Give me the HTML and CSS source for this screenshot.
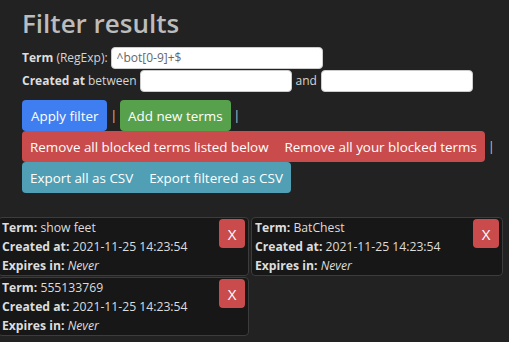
FILE: index.html
```html
<!DOCTYPE html>
<html lang="en">

<head>
    <meta charset="UTF-8" />
    <title>Filter results</title>
    <link rel="stylesheet" href="styles.css">
</head>

<body>

    <div class="filtro">
        <h1>Filter results</h1>

        <div class="linha">
            <b>Term</b>&nbsp;<span class="dica">(RegExp):</span>
            <input type="text" class="campo campoTermo" value="^bot[0-9]+$" />
        </div>
        <div class="linha">
            <b>Created at</b>&nbsp;between
            <input type="text" class="campo campoData" />
            <span class="e">and</span>
            <input type="text" class="campo campoData" />
        </div>

        <div class="acoes">
            <button class="btn azul">Apply filter</button>
            <span class="sep">|</span>
            <button class="btn verde">Add new terms</button>
            <span class="sep">|</span>
            <div class="grupo">
                <button class="btn vermelho">Remove all blocked terms listed below</button>
                <button class="btn vermelho">Remove all your blocked terms</button>
            </div>
            <span class="sep">|</span>
            <div class="grupo">
                <button class="btn ciano">Export all as CSV</button>
                <button class="btn ciano">Export filtered as CSV</button>
            </div>
        </div>
    </div>

    <div class="termos">
        <div class="termo">
            <button class="remover">X</button>
            <div><b>Term:</b> show feet</div>
            <div><b>Created at:</b> 2021-11-25 14:23:54</div>
            <div><b>Expires in:</b> <i>Never</i></div>
        </div>
        <div class="termo">
            <button class="remover">X</button>
            <div><b>Term:</b> BatChest</div>
            <div><b>Created at:</b> 2021-11-25 14:23:54</div>
            <div><b>Expires in:</b> <i>Never</i></div>
        </div>
        <div class="termo">
            <button class="remover">X</button>
            <div><b>Term:</b> 555133769</div>
            <div><b>Created at:</b> 2021-11-25 14:23:54</div>
            <div><b>Expires in:</b> <i>Never</i></div>
        </div>
    </div>

</body>

</html>
```

FILE: styles.css
```css
body {
    margin: 0;
    background-color: #222;
    color: #ddd;
    font-family: "Open Sans", "Noto Sans", sans-serif;
    font-size: 12px;
}

.filtro {
    padding: 6px 0 0 22px;
}

h1 {
    margin: 0 0 6px 0;
    font-size: 26px;
    font-weight: 600;
    line-height: 34px;
    color: #bcbcbc;
}

.linha {
    display: flex;
    align-items: center;
    height: 23px;
    color: #d4d4d4;
}

.linha b {
    color: #ddd;
}

.campo {
    height: 22px;
    box-sizing: border-box;
    border: 1px solid #ccc;
    border-radius: 4px;
    background: white;
    font-family: inherit;
    font-size: 12px;
    color: #666;
    padding: 0 5px;
    margin-left: 3px;
}

.campoTermo {
    width: 212px;
}

.campoData {
    width: 152px;
}

.e {
    margin: 0 1px 0 4px;
}

.acoes {
    display: flex;
    flex-wrap: wrap;
    align-items: center;
    margin-top: 8px;
}

.sep {
    margin: 0 3px;
    color: #ccc;
}

.grupo {
    display: flex;
}

.btn {
    height: 31px;
    border: none;
    border-radius: 4px;
    padding: 0 8px;
    font-family: inherit;
    font-size: 13.4px;
    color: white;
}

.azul {
    padding: 0 9px;
}

.grupo .btn {
    border-radius: 0;
}

.grupo .btn:first-child {
    border-radius: 4px 0 0 4px;
}

.grupo .btn:last-child {
    border-radius: 0 4px 4px 0;
}

.azul {
    background-color: #3f7ef0;
}

.verde {
    background-color: #58a14c;
}

.vermelho {
    background-color: #c94b4b;
}

.ciano {
    background-color: #509fb5;
}

.termos {
    display: grid;
    grid-template-columns: 251px 252px;
    gap: 1px 2px;
    margin: 24px 0 0 -2px;
}

.termo {
    background-color: #171717;
    border: 1px solid #3c3c3c;
    border-radius: 4px;
    padding: 0 3px;
    font-size: 12.2px;
    line-height: 19px;
}

.termo b {
    color: #ddd;
}

.remover {
    float: right;
    width: 26px;
    height: 29px;
    margin-top: 1px;
    border: none;
    border-radius: 4px;
    background-color: #c94b4b;
    color: white;
    font-family: inherit;
    font-size: 15px;
}
```
